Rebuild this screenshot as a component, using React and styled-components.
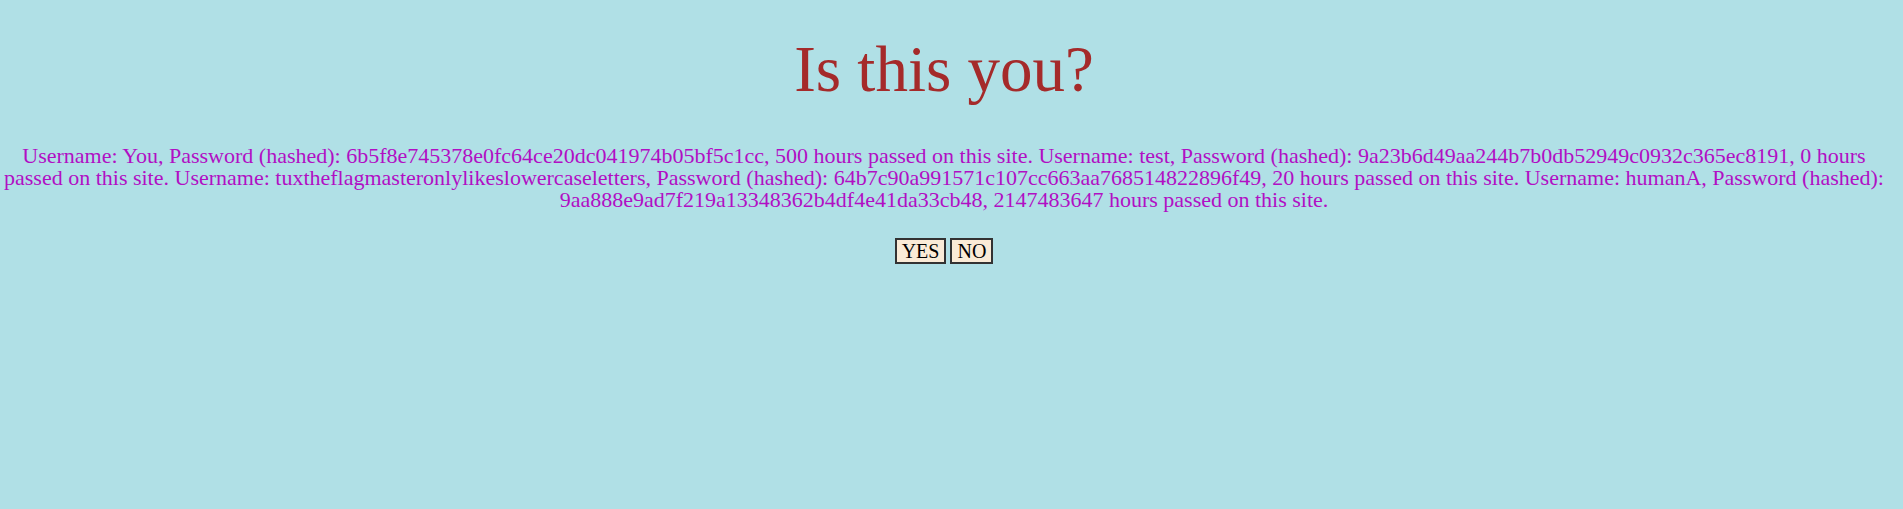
import React from 'react';
import styled, { createGlobalStyle } from 'styled-components';

const GlobalStyle = createGlobalStyle`
    html, body {
        margin: 0;
        padding: 0;
        background: #b0e0e6;
    }
    body {
        font-family: "Liberation Serif", "Times New Roman", serif;
    }
`;

const Page = styled.div`
    width: calc(100% - 15px);
    min-height: 509px;
    display: flex;
    flex-direction: column;
    align-items: center;
    text-align: center;
    `;

const Title = styled.h1`
    margin: 37px 0 0;
    font-size: 65px;
    line-height: 65px;
    font-weight: normal;
    color: #a52a2a;
    `;

const Users = styled.p`
    margin: 43px 0 0;
    font-size: 22px;
    line-height: 22px;
    color: #b10fc4;
    `;

const Choices = styled.div`
    display: flex;
    gap: 4px;
    margin-top: 27px;
    `;

const Choice = styled.button`
    font-family: "Liberation Serif", "Times New Roman", serif;
    font-size: 20px;
    line-height: 22px;
    padding: 0 5px;
    color: #000;
    background: #faebd7;
    border: 2px solid #333;
    cursor: pointer;
    `;

const users = [
    { name: 'You', hash: '6b5f8e745378e0fc64ce20dc041974b05bf5c1cc', hours: 500 },
    { name: 'test', hash: '9a23b6d49aa244b7b0db52949c0932c365ec8191', hours: 0 },
    { name: 'tuxtheflagmasteronlylikeslowercaseletters', hash: '64b7c90a991571c107cc663aa768514822896f49', hours: 20 },
    { name: 'humanA', hash: '9aa888e9ad7f219a13348362b4df4e41da33cb48', hours: 2147483647 },
];

export default function App() {
    const text = users
        .map(u => `Username: ${u.name}, Password (hashed): ${u.hash}, ${u.hours} hours passed on this site.`)
        .join(' ');
    return (
        <Page>
            <GlobalStyle />
            <Title>Is this you?</Title>
            <Users>{text}</Users>
            <Choices>
                <Choice>YES</Choice>
                <Choice>NO</Choice>
            </Choices>
        </Page>
    );
}
